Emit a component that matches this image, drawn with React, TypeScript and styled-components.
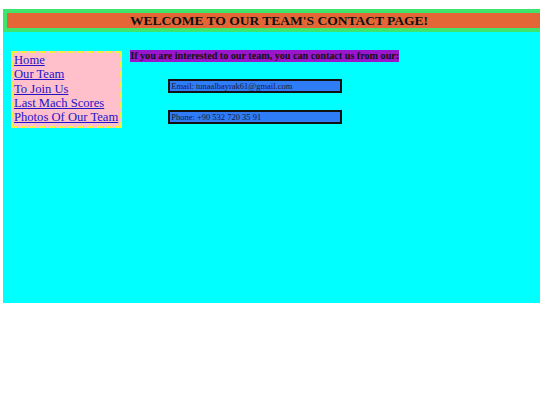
import React from "react";
import styled, { createGlobalStyle } from "styled-components";

const Global = createGlobalStyle`
  html, body { margin: 0; padding: 0; background: #ffffff; overflow: hidden; }
  body { font-family: "Liberation Serif", "Times New Roman", serif; }
`;

const Page = styled.div`
  margin: 9px 0 0 3px;
  width: 552px;
  height: 294px;
  background: #00ffff;
  display: flex;
  flex-direction: column;
`;

const Header = styled.header`
  border: 4px solid #3ee46c;
  background: #e46535;
  height: 15px;
  display: flex;
  align-items: center;
  justify-content: center;
`;

const Title = styled.h1`
  margin: 0;
  font-size: 13.5px;
  font-weight: bold;
  color: #111;
  line-height: 15px;
`;

const Body = styled.div`
  display: flex;
  align-items: flex-start;
  padding: 18px 0 0 8px;
  gap: 8px;
`;

const Nav = styled.nav`
  margin-top: 1px;
  border: 2px dashed #eef23a;
  background: #ffc0cb;
  padding: 0 2px 2px 1px;
  display: flex;
  flex-direction: column;
`;

const NavLink = styled.a`
  color: #2414c8;
  font-size: 12.6px;
  line-height: 14.3px;
  text-decoration: underline;
  white-space: nowrap;
`;

const Main = styled.div`
  display: flex;
  flex-direction: column;
  align-items: flex-start;
`;

const Intro = styled.p`
  margin: 0;
  font-size: 10.15px;
  font-weight: bold;
  line-height: 12px;
  background: #9a16cc;
  color: #111;
`;

const ContactBox = styled.div<{ $top: number }>`
  margin: ${(p) => p.$top}px 0 0 38px;
  width: 169px;
  height: 10px;
  border: 2px solid #111;
  background: #2e7cf6;
  font-size: 8.5px;
  line-height: 10px;
  color: #1b1b3a;
  padding-left: 1px;
  white-space: nowrap;
`;

export default function App() {
  return (
    <>
      <Global />
      <Page>
        <Header>
          <Title>WELCOME TO OUR TEAM'S CONTACT PAGE!</Title>
        </Header>
        <Body>
          <Nav>
            <NavLink href="#">Home</NavLink>
            <NavLink href="#">Our Team</NavLink>
            <NavLink href="#">To Join Us</NavLink>
            <NavLink href="#">Last Mach Scores</NavLink>
            <NavLink href="#">Photos Of Our Team</NavLink>
          </Nav>
          <Main>
            <Intro>If you are interested to our team, you can contact us from our:</Intro>
            <ContactBox $top={17}>Email: tunaalbayrak61@gmail.com</ContactBox>
            <ContactBox $top={17}>Phone: +90 532 720 35 91</ContactBox>
          </Main>
        </Body>
      </Page>
    </>
  );
}
